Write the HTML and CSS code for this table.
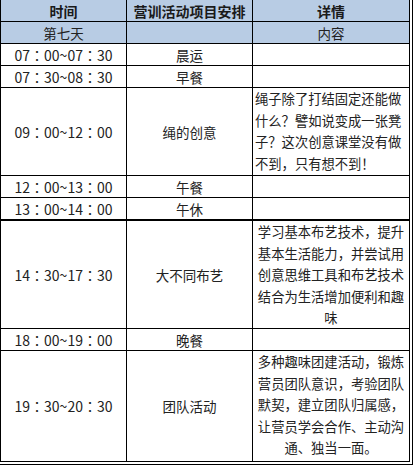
FILE: index.html
```html
<!DOCTYPE html>
<html lang="zh-CN">
<head>
<meta charset="utf-8">
<title>营训活动项目安排</title>
<link rel="stylesheet" href="styles.css">
</head>
<body>
<div class="sheet" role="table">
  <div class="cell head first" role="columnheader">时间</div>
  <div class="cell head" role="columnheader">营训活动项目安排</div>
  <div class="cell head last" role="columnheader">详情</div>

  <div class="cell sub first">第七天</div>
  <div class="cell sub"></div>
  <div class="cell sub last">内容</div>

  <div class="cell first time">07：00~07：30</div>
  <div class="cell">晨运</div>
  <div class="cell last"></div>

  <div class="cell first time">07：30~08：30</div>
  <div class="cell">早餐</div>
  <div class="cell last"></div>

  <div class="cell first time">09：00~12：00</div>
  <div class="cell">绳的创意</div>
  <div class="cell last detail left"><p>绳子除了打结固定还能做什么？譬如说变成一张凳子？这次创意课堂没有做不到，只有想不到！</p></div>

  <div class="cell first time">12：00~13：00</div>
  <div class="cell">午餐</div>
  <div class="cell last"></div>

  <div class="cell first time thick">13：00~14：00</div>
  <div class="cell thick">午休</div>
  <div class="cell last thick"></div>

  <div class="cell first time">14：30~17：30</div>
  <div class="cell">大不同布艺</div>
  <div class="cell last detail"><p>学习基本布艺技术，提升基本生活能力，并尝试用创意思维工具和布艺技术结合为生活增加便利和趣味</p></div>

  <div class="cell first time">18：00~19：00</div>
  <div class="cell">晚餐</div>
  <div class="cell last"></div>

  <div class="cell first time end">19：30~20：30</div>
  <div class="cell end">团队活动</div>
  <div class="cell last detail end"><p>多种趣味团建活动，锻炼营员团队意识，考验团队默契，建立团队归属感，让营员学会合作、主动沟通、独当一面。</p></div>
</div>
</body>
</html>
```
FILE: styles.css
```css
html, body {
  margin: 0;
  padding: 0;
  background: #fff;
}

.sheet {
  display: inline-grid;
  grid-template-columns: 127px 126px 156px;
  grid-template-rows: 22px 22px 22px 22px 88px 22px 23px 108px 22px 110px;
  border-right: 4px double #000;
  border-bottom: 4px double #000;
  font-family: "Noto Sans CJK SC", "Noto Sans", sans-serif;
  font-size: 13.5px;
  color: #222;
}

.cell {
  box-sizing: border-box;
  display: flex;
  align-items: center;
  justify-content: center;
  text-align: center;
  border-right: 1px solid #000;
  border-bottom: 1px solid #000;
  line-height: 20px;
  white-space: nowrap;
}

.cell.first { border-left: 1px solid #000; }
.cell.last { border-right: none; }

.cell.head {
  background: #b8cce4;
  font-weight: bold;
  font-size: 14px;
  color: #1a1a1a;
}

.cell.sub {
  background: #b8cce4;
}

.cell.time {
  font-family: "Noto Sans CJK JP", "Noto Sans CJK SC", sans-serif;
  font-size: 14px;
}

.cell.detail {
  white-space: normal;
  align-items: flex-start;
  padding: 0 2px;
  font-size: 13.3px;
}

.cell.detail p {
  margin: 0;
  line-height: 21.6px;
  width: 100%;
}

.cell.detail.left {
  text-align: left;
}

.cell.thick { border-bottom-width: 2px; }
.cell.end { border-bottom: none; }
```
